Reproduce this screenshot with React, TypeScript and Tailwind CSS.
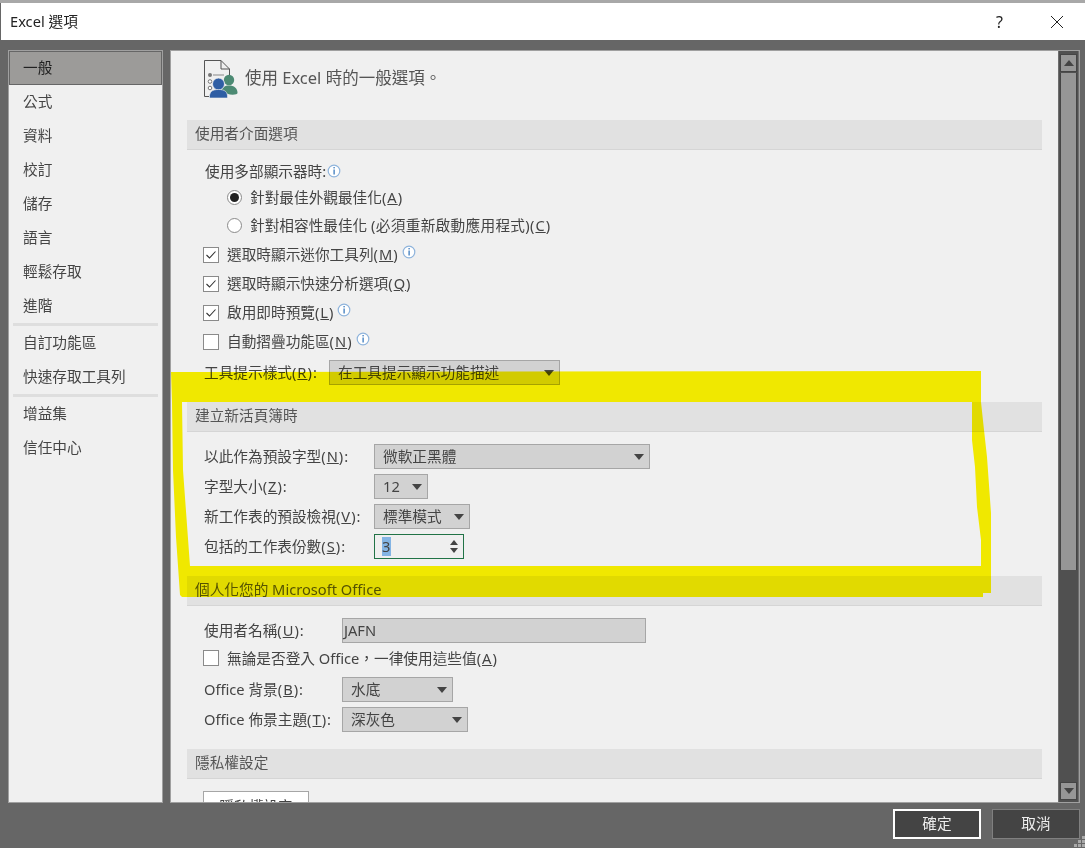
const navTop = ["公式", "資料", "校訂", "儲存", "語言", "輕鬆存取", "進階"];
const navMid = ["自訂功能區", "快速存取工具列"];
const navEnd = ["增益集", "信任中心"];

function Info() {
  return (
    <svg width="14" height="14" viewBox="0 0 14 14" className="shrink-0">
      <circle cx="7" cy="7" r="5.8" fill="#fff" stroke="#8fb4dc" strokeWidth="1.2" />
      <rect x="6.5" y="3" width="1.2" height="1.4" fill="#2a6fb8" />
      <rect x="6.5" y="5.5" width="1.2" height="5" fill="#2a6fb8" />
    </svg>
  );
}

function Arrow({ up }: { up?: boolean }) {
  return (
    <svg width="10" height="6" viewBox="0 0 10 6" className="shrink-0">
      <polygon points={up ? "5,0 10,6 0,6" : "0,0 10,0 5,6"} fill="#444" />
    </svg>
  );
}

function Check({ checked }: { checked?: boolean }) {
  return (
    <span className="w-[16px] h-[16px] shrink-0 bg-white border border-[#8a8a8a] flex items-center justify-center">
      {checked && (
        <svg width="12" height="10" viewBox="0 0 12 10">
          <path d="M1.5 5 L4.5 8 L10.5 1.5" fill="none" stroke="#333" strokeWidth="1.1" />
        </svg>
      )}
    </span>
  );
}

function Radio({ checked }: { checked?: boolean }) {
  return (
    <span className="w-[15px] h-[15px] shrink-0 rounded-full bg-white border border-[#8a8a8a] flex items-center justify-center">
      {checked && <span className="w-[9px] h-[9px] rounded-full bg-[#222]" />}
    </span>
  );
}

// access key like (N), its parens run wider in the reference font
function Key({ k }: { k: string }) {
  return (
    <span className="tracking-[1px]">
      (<u>{k}</u>)
    </span>
  );
}

function Select({ width, text }: { width: string; text: string }) {
  return (
    <div className={`${width} h-[25px] shrink-0 bg-[#d2d2d2] border border-[#a6a6a6] flex items-center justify-between pl-[8px] pr-[5px]`}>
      <span>{text}</span>
      <Arrow />
    </div>
  );
}

function Section({ title }: { title: string }) {
  return (
    <div className="h-[30px] ml-[16px] w-[855px] bg-[#e1e1e1] border-b border-[#d5d5d5] flex items-center pl-[8px] pb-[2px] text-[#555]">
      {title}
    </div>
  );
}

function NavItem({ text }: { text: string }) {
  return <div className="h-[34px] pl-[14px] pb-[2px] flex items-center">{text}</div>;
}

function SheetIcon() {
  return (
    <svg width="36" height="40" viewBox="0 0 36 40">
      <path d="M.5 .5 H17 L25.5 9 V15 M17 .5 V9 H25.5 M.5 .5 V36.5 H5" fill="none" stroke="#555" strokeWidth="1" />
      <circle cx="6" cy="15" r="2" fill="#777" />
      <path d="M9 15 H20" stroke="#888" strokeWidth="1" />
      <circle cx="6" cy="21.5" r="1.8" fill="#fff" stroke="#777" />
      <circle cx="6" cy="28" r="1.8" fill="#fff" stroke="#777" />
      <circle cx="25" cy="20" r="5.2" fill="#4c8a73" />
      <path d="M17.5 31 C18 27 21 25.5 25 25.5 C30 25.5 33.5 28 33.5 33 C33.5 35 24 36 17.5 31 Z" fill="#4c8a73" />
      <circle cx="14.5" cy="24" r="6" fill="#2f5ea4" stroke="#f0f0f0" strokeWidth=".8" />
      <path d="M5.5 38 C5 32 8 29.5 14.5 29.5 C21 29.5 24 32 23.5 38 Z" fill="#2f5ea4" stroke="#f0f0f0" strokeWidth=".6" />
    </svg>
  );
}

export default function App() {
  return (
    <div className="relative w-[1085px] h-[848px] overflow-hidden bg-[#666] text-[14.67px] leading-none text-[#444] font-['Noto_Sans','Noto_Sans_CJK_TC',sans-serif]">
      <div className="h-[3px] bg-[#a8a8a8]" />

      <div className="h-[37px] ml-[1px] bg-white flex items-center justify-between text-[#222]">
        <span className="pl-[9px]">Excel 選項</span>
        <div className="flex items-center">
          <span className="mr-[47px] text-[16px]">?</span>
          <svg width="14" height="14" viewBox="0 0 14 14" className="mr-[21px]">
            <path d="M1 1 L13 13 M13 1 L1 13" stroke="#222" strokeWidth="1" />
          </svg>
        </div>
      </div>

      <div className="flex pt-[10px] pl-[8px]">
        <nav className="w-[155px] h-[753px] bg-[#f0f0f0] border border-[#a0a0a0]">
          <div className="h-[34px] pl-[13px] pb-[2px] flex items-center bg-[#9c9b99] border border-[#666] text-[#222]">一般</div>
          {navTop.map((item) => (
            <NavItem key={item} text={item} />
          ))}
          <div className="h-[3px] mx-[4px] bg-[#dedede]" />
          {navMid.map((item) => (
            <NavItem key={item} text={item} />
          ))}
          <div className="h-[3px] mx-[4px] bg-[#dedede]" />
          {navEnd.map((item) => (
            <NavItem key={item} text={item} />
          ))}
        </nav>

        <main className="relative ml-[7px] w-[910px] h-[753px] bg-[#f0f0f0] border border-[#a0a0a0] overflow-hidden">
          <div className="h-[69px] pl-[33px] pt-[9px] flex">
            <SheetIcon />
            <span className="ml-[5px] mt-[10px] text-[16.5px] text-[#555]">使用 Excel 時的一般選項。</span>
          </div>

          <Section title="使用者介面選項" />
          <div className="pl-[34px] mt-[9px] h-[24px] flex items-center gap-[1px]">
            <span>使用多部顯示器時:</span>
            <Info />
          </div>
          <div className="h-[28px] pl-[56px] flex items-center gap-[8px]">
            <Radio checked />
            <span>針對最佳外觀最佳化<Key k="A" /></span>
          </div>
          <div className="h-[29px] pl-[56px] flex items-center gap-[8px]">
            <Radio />
            <span>針對相容性最佳化 <span className="tracking-[0.3px]">(必須重新啟動應用程式)</span><Key k="C" /></span>
          </div>
          <div className="h-[29px] pl-[32px] flex items-center gap-[8px]">
            <Check checked />
            <span>選取時顯示迷你工具列<Key k="M" /></span>
            <span className="-ml-[5px] -mt-[5px]"><Info /></span>
          </div>
          <div className="h-[29px] pl-[32px] flex items-center gap-[8px]">
            <Check checked />
            <span>選取時顯示快速分析選項<Key k="Q" /></span>
          </div>
          <div className="h-[29px] pl-[32px] flex items-center gap-[8px]">
            <Check checked />
            <span>啟用即時預覽<Key k="L" /></span>
            <span className="-ml-[5px] -mt-[5px]"><Info /></span>
          </div>
          <div className="h-[29px] pl-[32px] flex items-center gap-[8px]">
            <Check />
            <span>自動摺疊功能區<Key k="N" /></span>
            <span className="-ml-[5px] -mt-[5px]"><Info /></span>
          </div>
          <div className="mt-[4px] pl-[33px] flex items-center">
            <span className="w-[125px]">工具提示樣式<Key k="R" />:</span>
            <Select width="w-[231px]" text="在工具提示顯示功能描述" />
          </div>

          <div className="mt-[17px]"><Section title="建立新活頁簿時" /></div>
          <div className="mt-[12px] pl-[33px] flex flex-col gap-[5px]">
            <div className="flex items-center">
              <span className="w-[170px]">以此作為預設字型<Key k="N" />:</span>
              <Select width="w-[276px]" text="微軟正黑體" />
            </div>
            <div className="flex items-center">
              <span className="w-[170px]">字型大小<Key k="Z" />:</span>
              <Select width="w-[54px]" text="12" />
            </div>
            <div className="flex items-center">
              <span className="w-[170px]">新工作表的預設檢視<Key k="V" />:</span>
              <Select width="w-[96px]" text="標準模式" />
            </div>
            <div className="flex items-center">
              <span className="w-[170px]">包括的工作表份數<Key k="S" />:</span>
              <div className="w-[90px] h-[25px] border border-[#217346] bg-[#efefef] flex items-center justify-between pl-[7px] pr-[5px]">
                <span className="bg-[#83b4e4] h-[19px] w-[9px] flex items-center">3</span>
                <div className="flex flex-col gap-[3px]">
                  <svg width="8" height="5" viewBox="0 0 8 5"><polygon points="4,0 8,5 0,5" fill="#444" /></svg>
                  <svg width="8" height="5" viewBox="0 0 8 5"><polygon points="0,0 8,0 4,5" fill="#444" /></svg>
                </div>
              </div>
            </div>
          </div>

          <div className="mt-[17px]"><Section title="個人化您的 Microsoft Office" /></div>
          <div className="mt-[12px] pl-[33px] flex items-center">
            <span className="w-[138px]">使用者名稱<Key k="U" />:</span>
            <div className="w-[304px] h-[25px] bg-[#d2d2d2] border border-[#a6a6a6] flex items-center pl-[1px]">JAFN</div>
          </div>
          <div className="mt-[2px] h-[26px] pl-[32px] flex items-center gap-[8px]">
            <Check />
            <span>無論是否登入 Office，一律使用這些值<Key k="A" /></span>
          </div>
          <div className="mt-[6px] pl-[33px] flex flex-col gap-[5px]">
            <div className="flex items-center">
              <span className="w-[138px]">Office 背景<Key k="B" />:</span>
              <Select width="w-[111px]" text="水底" />
            </div>
            <div className="flex items-center">
              <span className="w-[138px]">Office 佈景主題<Key k="T" />:</span>
              <Select width="w-[126px]" text="深灰色" />
            </div>
          </div>

          <div className="mt-[17px]"><Section title="隱私權設定" /></div>
          <button className="block mt-[12px] ml-[32px] w-[106px] h-[30px] bg-white border border-[#a6a6a6]">隱私權設定</button>

          <div className="absolute right-0 top-0 bottom-0 w-[21px] bg-[#505050] border-l border-r border-[#6e6e6e]">
            <div className="mt-[3px] mx-[1px] h-[18px] bg-[#969696] flex items-center justify-center border border-[#444]">
              <Arrow up />
            </div>
            <div className="mx-[1px] mt-[1px] h-[497px] bg-[#969696] border-x border-[#444]" />
            <div className="absolute left-[1px] right-[1px] bottom-[2px] h-[18px] bg-[#969696] flex items-center justify-center border border-[#444]">
              <Arrow />
            </div>
          </div>
        </main>
      </div>

      <div className="flex justify-end gap-[11px] pt-[6px] pr-[5px] text-[#eee]">
        <button className="w-[88px] h-[30px] pb-[2px] bg-[#444] border-2 border-white">確定</button>
        <button className="w-[88px] h-[30px] pb-[2px] bg-[#444] border border-[#808080]">取消</button>
      </div>

      <svg width="12" height="12" viewBox="0 0 12 12" className="absolute right-0 bottom-0">
        <g fill="#a8a8a8">
          <rect x="9" y="0" width="3" height="3" />
          <rect x="5" y="4" width="3" height="3" />
          <rect x="9" y="4" width="3" height="3" />
          <rect x="1" y="8" width="3" height="3" />
          <rect x="5" y="8" width="3" height="3" />
          <rect x="9" y="8" width="3" height="3" />
        </g>
      </svg>

      {/* hand drawn yellow marker over the page */}
      <svg width="1085" height="848" viewBox="0 0 1085 848" className="absolute left-0 top-0 pointer-events-none mix-blend-multiply">
        <path
          fillRule="evenodd"
          fill="#fff700"
          d="M171 372 L981 371 L981 402 L984 430 L987 457 L991 513 L991 593 L983 593 L983 597 L182 597 L180 595 L176 537 L173 470 L172 403 Z M182 402 L183 470 L190 566 L981 566 L981 540 L977 507 L975 467 L972 440 L972 402 Z"
        />
      </svg>
    </div>
  );
}
